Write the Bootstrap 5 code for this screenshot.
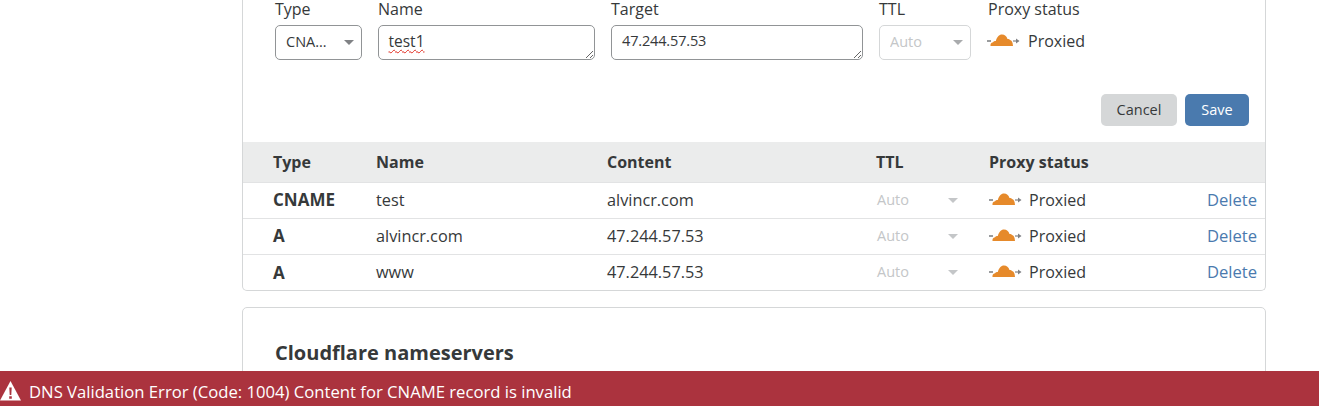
<!DOCTYPE html>
<html lang="en">
<head>
<meta charset="utf-8">
<title>DNS</title>
<link rel="stylesheet" href="https://cdn.jsdelivr.net/npm/bootstrap@5.3.0/dist/css/bootstrap.min.css">
<style>
html,body{height:406px;overflow:hidden;background:#fff}
body{font-family:"Open Sans","Liberation Sans",sans-serif;font-size:16px;color:#36393a}
.page-wrap{width:1024px;margin-left:242px}
.dns-card{border:1px solid #d5d7d8;border-top:0;border-radius:0 0 5px 5px;background:#fff;overflow:hidden}
.edit-form{padding:0 16px 16px 32px;height:142px}
.field-row{display:flex;gap:16px}
.field-label{display:block;font-size:16px;line-height:19px;height:25px;margin:0;white-space:nowrap;color:#36393a}
.type-sel{width:87px}.name-f{width:217px}.target-f{width:252px}.ttl-f{width:92px}
.sel-box.form-select,.txt-box.form-control{height:35px;min-height:35px;font-size:14.5px;line-height:20px;color:#36393a;border:1px solid #919496;border-radius:5px;padding:5px 10px 7px;font-family:inherit}
.sel-box.form-select{background-size:14px 7px;background-position:right 5px center;padding-right:28px;text-overflow:ellipsis;background-image:url("data:image/svg+xml,%3Csvg xmlns='http://www.w3.org/2000/svg' viewBox='0 0 14 7'%3E%3Cpath fill='%23808285' d='M2 1h10L7 6z'/%3E%3C/svg%3E")}
.sel-box.form-select:disabled{background-color:#fff;border-color:#d5d7d8;color:#c4c6c8;background-image:url("data:image/svg+xml,%3Csvg xmlns='http://www.w3.org/2000/svg' viewBox='0 0 14 7'%3E%3Cpath fill='%23a9abad' d='M2 1h10L7 6z'/%3E%3C/svg%3E")}
.txt-box.form-control{resize:both;overflow:hidden}
.spell-err.form-control{text-decoration:underline wavy #e02b20 1px;text-underline-offset:2px;font-size:15.5px;padding-left:9.500px}
.target-box.form-control{letter-spacing:-.15px}
.proxy-cell{display:flex;align-items:center;gap:7px;font-size:16px;line-height:20px}
.proxy-f{margin-left:1px}
.proxy-f .proxy-cell{height:32px;margin-left:-1px;gap:8px}
.act-row{display:flex;justify-content:flex-end;gap:8px;margin-top:34px}
.act-btn{height:32px;padding:0;font-size:14.5px;border:0;border-radius:5px;line-height:32px}
.btn-cancel,.btn-cancel:hover{background:#d5d7d8;color:#36393a;width:76px}
.btn-save,.btn-save:hover{background:#4a7aae;color:#fff;width:64px}
.rec-table{table-layout:fixed;width:100%;margin:0;font-size:16.3px;color:#36393a}
.rec-table th,.rec-table td{padding:0;vertical-align:middle;border-bottom:1px solid #e2e3e4;box-shadow:none;color:#36393a;background:transparent}
.rec-table thead th{background:#ebecec;height:40px;font-weight:700;font-size:16px}
.rec-table tbody td{height:36px}
.rec-table tbody tr:last-child td{border-bottom:0}
.rec-table .c-type{padding-left:30px}
.rec-table td.c-type{font-weight:700;font-size:17px}
.ttl-mini{display:flex;align-items:center;justify-content:space-between;width:82px;padding-left:1px;color:#c4c6c8;font-size:14.5px}
.ttl-arrow{width:0;height:0;border-left:5.500px solid transparent;border-right:5.500px solid transparent;border-top:5.500px solid #c4c6c8}
.del-link{color:#4a7aae;text-decoration:none;font-size:16.600px}
.rec-table td.c-del{text-align:right;padding-right:8px}
.ns-card{border:1px solid #d5d7d8;border-radius:5px;margin-top:16px;padding:31px 32px;height:200px;background:#fff}
.ns-title{font-size:20px;font-weight:700;line-height:28px;margin:0;color:#36393a}
.err-bar{position:fixed;left:0;right:0;bottom:0;height:35px;background:#ab333e;color:#fff;font-size:16.660px;display:flex;align-items:center;gap:7px;padding-top:7px}
.err-icon{margin-top:-2px}
</style>
</head>
<body>
<div class="page-wrap">
  <div class="dns-card">
    <form class="edit-form">
      <div class="field-row">
        <div class="type-sel"><label class="field-label">Type</label>
          <select class="form-select sel-box"><option>CNAME</option></select></div>
        <div class="name-f"><label class="field-label">Name</label>
          <textarea class="form-control txt-box spell-err" rows="1" spellcheck="false">test1</textarea></div>
        <div class="target-f"><label class="field-label">Target</label>
          <textarea class="form-control txt-box target-box" rows="1" spellcheck="false">47.244.57.53</textarea></div>
        <div class="ttl-f"><label class="field-label">TTL</label>
          <select class="form-select sel-box" disabled><option>Auto</option></select></div>
        <div class="proxy-f"><label class="field-label">Proxy status</label>
          <div class="proxy-cell"><svg width="33" height="14" viewBox="0 0 33 14"><use href="#cf-cloud"/></svg><span>Proxied</span></div></div>
      </div>
      <div class="act-row">
        <button type="button" class="btn act-btn btn-cancel">Cancel</button>
        <button type="button" class="btn act-btn btn-save">Save</button>
      </div>
    </form>
    <table class="table rec-table">
      <colgroup><col style="width:133px"><col style="width:231px"><col style="width:269px"><col style="width:113px"><col><col style="width:100px"></colgroup>
      <thead><tr><th class="c-type">Type</th><th>Name</th><th>Content</th><th>TTL</th><th>Proxy status</th><th></th></tr></thead>
      <tbody>
        <tr><td class="c-type">CNAME</td><td>test</td><td>alvincr.com</td><td><div class="ttl-mini"><span>Auto</span><i class="ttl-arrow"></i></div></td><td><div class="proxy-cell"><svg width="33" height="14" viewBox="0 0 33 14"><use href="#cf-cloud"/></svg><span>Proxied</span></div></td><td class="c-del"><a class="del-link" href="#">Delete</a></td></tr>
        <tr><td class="c-type">A</td><td>alvincr.com</td><td>47.244.57.53</td><td><div class="ttl-mini"><span>Auto</span><i class="ttl-arrow"></i></div></td><td><div class="proxy-cell"><svg width="33" height="14" viewBox="0 0 33 14"><use href="#cf-cloud"/></svg><span>Proxied</span></div></td><td class="c-del"><a class="del-link" href="#">Delete</a></td></tr>
        <tr><td class="c-type">A</td><td>www</td><td>47.244.57.53</td><td><div class="ttl-mini"><span>Auto</span><i class="ttl-arrow"></i></div></td><td><div class="proxy-cell"><svg width="33" height="14" viewBox="0 0 33 14"><use href="#cf-cloud"/></svg><span>Proxied</span></div></td><td class="c-del"><a class="del-link" href="#">Delete</a></td></tr>
      </tbody>
    </table>
  </div>
  <div class="ns-card"><h2 class="ns-title">Cloudflare nameservers</h2></div>
</div>
<div class="err-bar">
  <svg class="err-icon" width="22" height="20" viewBox="0 0 22 20"><path fill="#fff" d="M10.500 0 21 19.500H0z"/><path fill="#ab333e" d="M9.300 6.500h2.400l-.4 7.500H9.700zM9.200 15.200h2.600v2.500H9.200z"/></svg>
  <span>DNS Validation Error (Code: 1004) Content for CNAME record is invalid</span>
</div>
<svg width="0" height="0" class="d-block position-absolute"><defs><g id="cf-cloud">
  <path fill="#9a9c9e" d="M0 6h4v2H0zM26 6.300h3v1.400h-3z"/><path fill="#808285" d="M29 4.500 32.500 7 29 9.500z"/>
  <path fill="#e68a2b" d="M3.500 12c-.3-2 .5-3.500 2.500-3.800.8-1.200 1.800-1.500 2.800-1.200C10 3 12 .5 15 .5c2.800 0 4.500 1.500 5.500 4.500 1-.3 2 0 2.500 1 1.800.2 2.800 2.500 3 6z"/>
</g></defs></svg>
<script src="https://cdn.jsdelivr.net/npm/bootstrap@5.3.0/dist/js/bootstrap.bundle.min.js"></script>
</body>
</html>
